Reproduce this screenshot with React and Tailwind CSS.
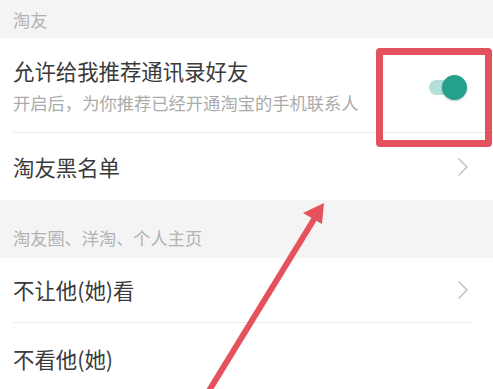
const font = { fontFamily: '"Noto Sans CJK SC", "Noto Sans", sans-serif' };

function Chevron() {
  return (
    <svg width="12" height="20" viewBox="0 0 12 20" className="text-[#c2c2c2]">
      <polyline points="2,2 10,10 2,18" fill="none" stroke="currentColor" strokeWidth="1.6" strokeLinecap="round" strokeLinejoin="round" />
    </svg>
  );
}

function SectionHeader({ children, className = '' }) {
  return (
    <div className={`flex bg-[#f4f4f4] pl-[13px] text-[17.2px] leading-[20px] text-[#b2b2b2] ${className}`}>
      {children}
    </div>
  );
}

function NavRow({ label, height, arrow = true, divider = false }) {
  return (
    <div className={`flex flex-col bg-white ${height}`}>
      <div className="flex flex-1 items-center justify-between pl-[13px] pr-[24px]">
        <span className="text-[21.4px] leading-[26px] text-[#3a3a3a]">{label}</span>
        {arrow && <Chevron />}
      </div>
      {divider && <div className="ml-[13px] mr-[21px] h-px bg-[#ececec]" />}
    </div>
  );
}

export default function App() {
  return (
    <div className="relative h-[389px] w-[493px] overflow-hidden bg-white" style={font}>
      {/* 淘友 */}
      <SectionHeader className="h-[38px] items-center pt-[2px]">淘友</SectionHeader>

      <div className="flex h-[95px] flex-col bg-white">
        <div className="flex flex-1 items-start justify-between pl-[13px] pr-[26px] pt-[20px]">
          <div className="flex flex-col gap-[9px]">
            <span className="text-[21.4px] leading-[26px] text-[#3a3a3a]">允许给我推荐通讯录好友</span>
            <span className="text-[17.3px] leading-[20px] text-[#ababab]">开启后，为你推荐已经开通淘宝的手机联系人</span>
          </div>
          {/* toggle */}
          <div className="mt-[17px] flex items-center">
            <div className="h-[15px] w-[34px] rounded-full bg-[#b6dfd9]" />
            <div className="-ml-[21px] h-[25px] w-[25px] rounded-full bg-[#24a08d] shadow-[0_1px_2px_rgba(0,0,0,0.25)]" />
          </div>
        </div>
        <div className="ml-[13px] h-px bg-[#ececec]" />
      </div>

      <NavRow label="淘友黑名单" height="h-[67px]" />

      <SectionHeader className="h-[58px] items-end pb-[10px]">淘友圈、洋淘、个人主页</SectionHeader>

      <NavRow label="不让他(她)看" height="h-[65px]" divider />
      <NavRow label="不看他(她)" height="h-[72px]" arrow={false} />

      {/* annotation: red box */}
      <div className="absolute left-[376px] top-[48px] h-[99px] w-[116px] rounded-[4px] border-[7px] border-[#e4535d]" />

      {/* annotation: arrow */}
      <svg className="absolute left-0 top-0" width="493" height="389" viewBox="0 0 493 389">
        <line x1="207" y1="394" x2="316" y2="216" stroke="#e4535d" strokeWidth="6" />
        <polygon points="324,203 303,213 322,224" fill="#e4535d" />
      </svg>
    </div>
  );
}
